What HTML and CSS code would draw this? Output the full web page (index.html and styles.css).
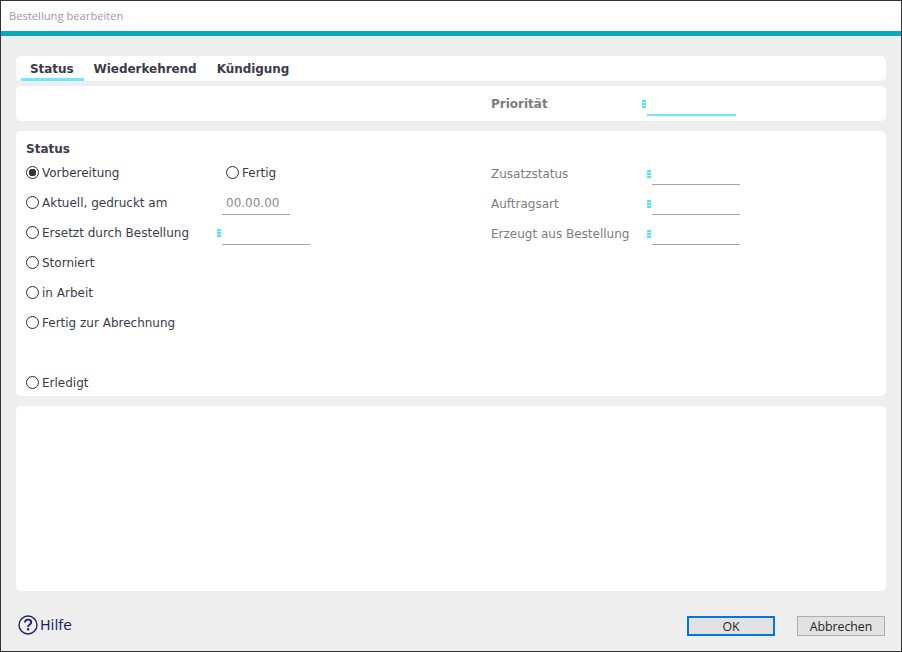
FILE: index.html
```html
<!DOCTYPE html>
<html lang="de">
<head>
<meta charset="UTF-8">
<title>Bestellung bearbeiten</title>
<link rel="stylesheet" href="styles.css">
</head>
<body>
<div class="fenster">
  <div class="titel">Bestellung bearbeiten</div>

  <div class="inhalt">
    <div class="panel tabs">
      <div class="tab aktiv">Status</div>
      <div class="tab">Wiederkehrend</div>
      <div class="tab">Kündigung</div>
    </div>

    <div class="panel prio">
      <div class="prio-label">Priorität</div>
      <span class="marke"></span>
      <div class="prio-feld"></div>
    </div>

    <div class="panel status">
      <div class="status-kopf">Status</div>

      <label class="opt spalte1"><input type="radio" name="status" checked><span>Vorbereitung</span></label>
      <label class="opt mitte fertig"><input type="radio" name="status"><span>Fertig</span></label>
      <div class="rechts"><span class="label">Zusatzstatus</span><span class="marke"></span><div class="feld"></div></div>

      <label class="opt spalte1"><input type="radio" name="status"><span>Aktuell, gedruckt am</span></label>
      <div class="mitte"><div class="feld datum">00.00.00</div></div>
      <div class="rechts"><span class="label">Auftragsart</span><span class="marke"></span><div class="feld"></div></div>

      <label class="opt spalte1"><input type="radio" name="status"><span>Ersetzt durch Bestellung</span></label>
      <div class="mitte mit-marke"><span class="marke"></span><div class="feld"></div></div>
      <div class="rechts"><span class="label">Erzeugt aus Bestellung</span><span class="marke"></span><div class="feld"></div></div>

      <label class="opt spalte1"><input type="radio" name="status"><span>Storniert</span></label>
      <label class="opt spalte1"><input type="radio" name="status"><span>in Arbeit</span></label>
      <label class="opt spalte1"><input type="radio" name="status"><span>Fertig zur Abrechnung</span></label>
      <label class="opt spalte1 erledigt"><input type="radio" name="status"><span>Erledigt</span></label>
    </div>

    <div class="panel leer"></div>
  </div>

  <div class="fuss">
    <div class="hilfe">
      <svg width="20" height="20" viewBox="0 0 20 20"><circle cx="10" cy="10" r="9" fill="none" stroke="#1f1f70" stroke-width="1.4"/><path d="M6.9 7.6c0-2 1.4-3 3.2-3s3.1 1.1 3.1 2.7c0 2.4-3.1 2.4-3.1 4.7" fill="none" stroke="#1f1f70" stroke-width="1.9"/><rect x="9" y="13.2" width="2.2" height="2.2" fill="#1f1f70"/></svg>
      <span>Hilfe</span>
    </div>
    <div class="knoepfe">
      <button class="knopf ok">OK</button>
      <button class="knopf">Abbrechen</button>
    </div>
  </div>
</div>
</body>
</html>
```

FILE: styles.css
```css
* {
  box-sizing: border-box;
  margin: 0;
  padding: 0;
}

body {
  width: 902px;
  height: 652px;
  overflow: hidden;
  font-family: "DejaVu Sans", sans-serif;
  font-size: 12px;
  color: #3b3b48;
}

.fenster {
  width: 902px;
  height: 652px;
  display: flex;
  flex-direction: column;
  background: #eeeeee;
  border: 1px solid #333333;
}

.titel {
  height: 35px;
  padding: 7px 8px 0;
  background: #fff;
  border-bottom: 5px solid #06a8bb;
  font-family: "Open Sans", sans-serif;
  font-size: 11.2px;
  line-height: 16px;
  color: #9a9a9f;
}

.inhalt {
  flex: 1;
  display: flex;
  flex-direction: column;
  padding: 20px 15px 0;
}

.panel {
  background: #fff;
  border-radius: 5px;
}

/* Reiter */
.tabs {
  height: 25px;
  margin-bottom: 5px;
  padding-left: 5px;
  display: flex;
}

.tab {
  padding: 0 10px;
  height: 25px;
  line-height: 26px;
  font-weight: bold;
  letter-spacing: -0.05px;
}

.tab.aktiv {
  padding-left: 9px;
  border-bottom: 3px solid #72e6fa;
}

/* Priorität */
.prio {
  height: 35px;
  margin-bottom: 10px;
  padding-left: 475px;
  display: flex;
  align-items: flex-start;
}

.prio-label {
  width: 151px;
  padding-top: 10px;
  line-height: 16px;
  font-weight: bold;
  color: #7b7b80;
}

.prio .marke {
  margin-top: 14px;
  margin-right: 1px;
}

.prio-feld {
  width: 89px;
  height: 30px;
  border-bottom: 2px solid #72e6fa;
}

/* Status */
.status {
  height: 265px;
  margin-bottom: 10px;
  padding: 10px 0 0 10px;
  display: grid;
  grid-template-columns: 190px 275px 1fr;
  grid-template-rows: 16px repeat(8, 30px);
  align-items: center;
}

.status-kopf {
  grid-column: 1 / 4;
  font-weight: bold;
  line-height: 15px;
}

.opt {
  display: flex;
  align-items: center;
  gap: 3px;
  height: 30px;
}

.opt span {
  padding-top: 1px;
}

.opt input {
  appearance: none;
  width: 13px;
  height: 13px;
  border: 1px solid #2a2a2a;
  border-radius: 50%;
  background: #fff;
}

.opt input:checked {
  background: radial-gradient(circle, #333 0 3.5px, #fff 4px);
}

.spalte1 {
  grid-column: 1;
}

.erledigt {
  grid-row: 9;
}

.mitte {
  grid-column: 2;
  height: 30px;
  padding-left: 6px;
}

.mitte.fertig {
  padding-left: 10px;
}

.mitte.mit-marke {
  display: flex;
  align-items: flex-start;
  padding-left: 1px;
}

.mit-marke .marke {
  margin-top: 12px;
  margin-right: 1px;
}

.rechts {
  grid-column: 3;
  height: 30px;
  display: flex;
  align-items: flex-start;
}

.label {
  width: 156px;
  line-height: 34px;
  color: #7b7b80;
}

.rechts .marke {
  margin-top: 13px;
  margin-right: 1px;
}

.marke {
  flex: none;
  width: 4px;
  height: 8px;
  background: repeating-linear-gradient(#55e0f8 0 2px, #c8f4fb 2px 3px);
}

.feld {
  width: 88px;
  height: 28px;
  border-bottom: 1px solid #a6a6a6;
}

.datum {
  width: 68px;
  padding-left: 4px;
  line-height: 33px;
  color: #8a8a8e;
}

.leer {
  height: 185px;
}

/* Fuss */
.fuss {
  flex: 1;
  display: flex;
  justify-content: space-between;
  padding: 0 16px 0 17px;
}

.hilfe {
  display: flex;
  align-items: center;
  gap: 2px;
  height: 20px;
  margin-top: 24px;
  font-size: 14px;
  color: #1f1f70;
}

.knoepfe {
  display: flex;
  gap: 22px;
  padding-top: 25px;
}

.knopf {
  width: 88px;
  height: 20px;
  background: #e1e1e1;
  border: 1px solid #adadad;
  font-family: "Open Sans", sans-serif;
  font-size: 12.3px;
  color: #222;
}

.knopf.ok {
  border: 2px solid #0078d7;
}
```
